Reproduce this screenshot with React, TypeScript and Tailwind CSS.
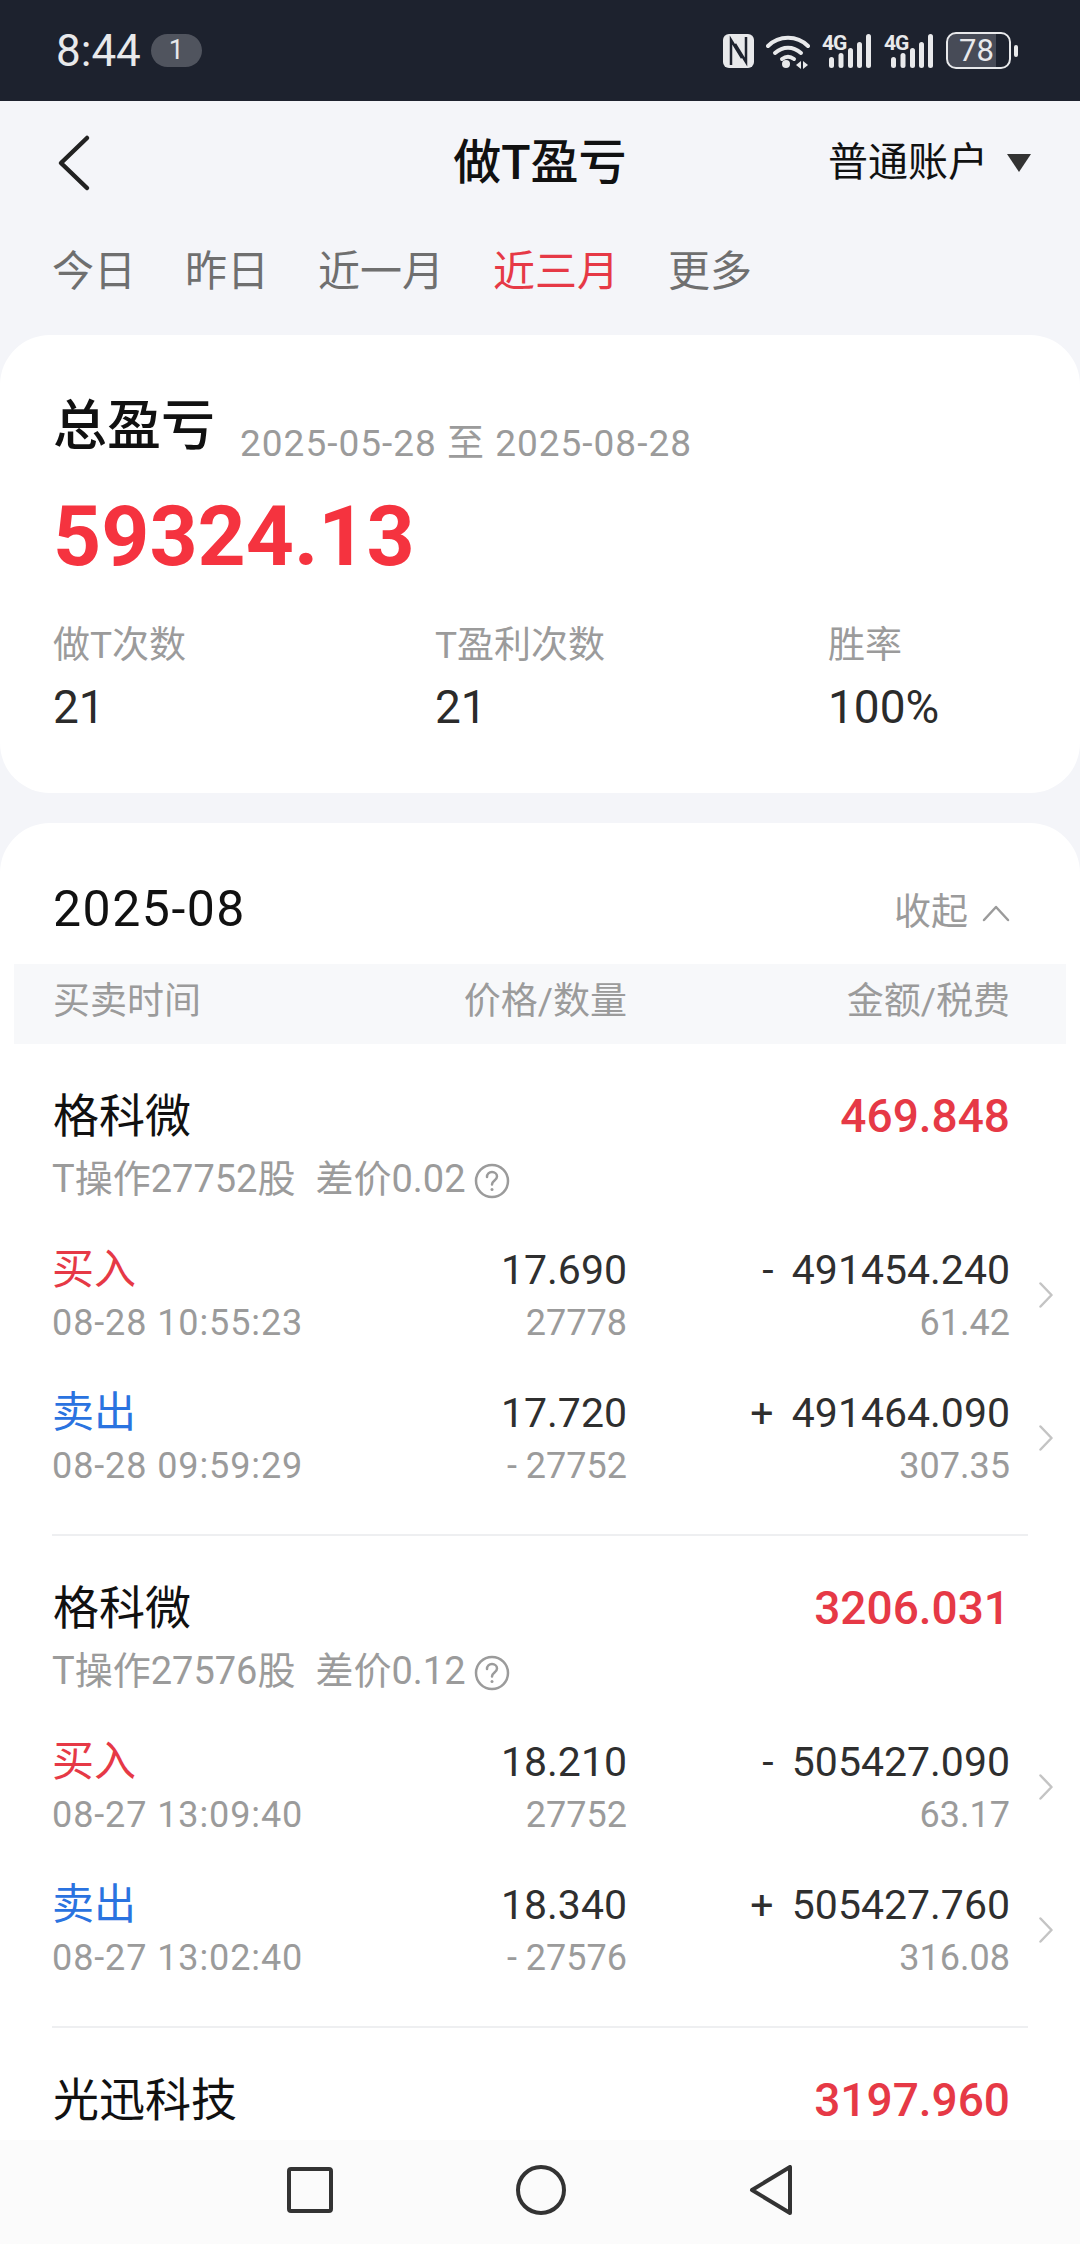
import React from "react";

const sans = "font-['Roboto','Noto_Sans_CJK_SC',sans-serif]";

type Trade = { side: "买入" | "卖出"; time: string; price: string; qty: string; amount: string; fee: string };
type Item = { name: string; profit: string; sub: string; diff: string; trades: Trade[] };

const items: Item[] = [
  {
    name: "格科微",
    profit: "469.848",
    sub: "T操作27752股",
    diff: "差价0.02",
    trades: [
      { side: "买入", time: "08-28 10:55:23", price: "17.690", qty: "27778", amount: "- 491454.240", fee: "61.42" },
      { side: "卖出", time: "08-28 09:59:29", price: "17.720", qty: "- 27752", amount: "+ 491464.090", fee: "307.35" },
    ],
  },
  {
    name: "格科微",
    profit: "3206.031",
    sub: "T操作27576股",
    diff: "差价0.12",
    trades: [
      { side: "买入", time: "08-27 13:09:40", price: "18.210", qty: "27752", amount: "- 505427.090", fee: "63.17" },
      { side: "卖出", time: "08-27 13:02:40", price: "18.340", qty: "- 27576", amount: "+ 505427.760", fee: "316.08" },
    ],
  },
];

function Signal() {
  return (
    <span className="w-[50px] h-[36px] flex flex-col relative">
      <span className="absolute left-0 top-0 text-[21px] leading-[20px] font-bold tracking-[-1px]">4G</span>
      <svg width="50" height="36" viewBox="0 0 50 36" fill="#e8e9eb">
        <rect x="7" y="24" width="5" height="11" rx="2.5" />
        <rect x="16.5" y="20" width="5" height="15" rx="2.5" />
        <rect x="26" y="15" width="5" height="20" rx="2.5" />
        <rect x="35" y="9" width="5" height="26" rx="2.5" />
        <rect x="44" y="1" width="5" height="34" rx="2.5" />
      </svg>
    </span>
  );
}

function StatusBar() {
  return (
    <div className="h-[101px] shrink-0 bg-[#1d222e] flex items-center pl-[56px] text-[#e8e9eb]">
      <span className="text-[44px] leading-none">8:44</span>
      <span className="ml-[10px] w-[51px] h-[33px] rounded-full bg-[#50545e] flex items-center justify-center text-[27px] leading-none">1</span>
      <div className="ml-auto mr-[62px] flex items-center">
        {/* nfc */}
        <svg width="31" height="34" viewBox="0 0 31 34" fill="none">
          <rect width="31" height="34" rx="6" fill="#e8e9eb" />
          <path d="M8 31V6l11 18M23 3v25L12 10" stroke="#1d222e" strokeWidth="2.500" />
        </svg>
        {/* wifi */}
        <svg className="ml-[12px]" width="46" height="36" viewBox="0 0 46 36" fill="none" stroke="#e8e9eb" strokeWidth="4" strokeLinecap="round">
          <path d="M2 13C13 2 31 2 42 13" />
          <path d="M9 20c8-7 18-7 26 0" />
          <path d="M16 26c4-3 8-3 12 0" />
          <circle cx="20" cy="31" r="4" fill="#e8e9eb" stroke="none" />
          <path d="M30 32l5-4v8zM37 28l5 4-5 4z" fill="#e8e9eb" stroke="none" />
        </svg>
        <span className="ml-[10px] flex">
          <Signal />
        </span>
        <span className="ml-[12px] flex">
          <Signal />
        </span>
        <span className="ml-[12px] w-[65px] h-[37px] rounded-[10px] border-2 border-[#e8e9eb] bg-[linear-gradient(90deg,#474b57_78%,transparent_78%)] flex items-center justify-center pr-[4px] text-[31px] leading-none">
          78
        </span>
        <span className="ml-[3px] w-[4px] h-[12px] rounded-full bg-[#e8e9eb]" />
      </div>
    </div>
  );
}

function Header() {
  return (
    <div className="h-[118px] pt-[6px] flex items-center pl-[56px] pr-[48px] relative">
      <svg width="36" height="58" viewBox="0 0 36 58" fill="none" stroke="#222" strokeWidth="4.500" strokeLinecap="round" strokeLinejoin="round">
        <path d="M31 4L5 29l26 25" />
      </svg>
      <h1 className="absolute left-0 right-0 text-center text-[48px] leading-none font-medium text-[#111]">做T盈亏</h1>
      <div className="ml-auto flex items-center">
        <span className="text-[40px] leading-none text-[#111]">普通账户</span>
        <svg className="ml-[18px]" width="26" height="20" viewBox="0 0 26 20">
          <path d="M1 1h24L13 19z" fill="#333" />
        </svg>
      </div>
    </div>
  );
}

function Tabs() {
  const tabs = ["今日", "昨日", "近一月", "近三月", "更多"];
  return (
    <div className="h-[116px] pb-[10px] pl-[52px] flex items-center gap-[49px] text-[42px] leading-none text-[#6f6f6f]">
      {tabs.map((t) => (
        <span key={t} className={t === "近三月" ? "text-[#e63946]" : ""}>
          {t}
        </span>
      ))}
    </div>
  );
}

function Summary() {
  const stats = [
    { label: "做T次数", value: "21", w: "w-[382px]" },
    { label: "T盈利次数", value: "21", w: "w-[393px]" },
    { label: "胜率", value: "100%", w: "" },
  ];
  return (
    <section className="h-[458px] shrink-0 rounded-[50px] bg-white pl-[53px] pt-[62px]">
      <div className="flex items-end h-[60px]">
        <span className="text-[54px] leading-[60px] font-medium text-[#111]">总盈亏</span>
        <span className="ml-[25px] mb-[-10px] text-[37px] leading-[46px] text-[#9b9b9b] tracking-[1px]">2025-05-28 至 2025-08-28</span>
      </div>
      <div className="mt-[35px] text-[84px] leading-[90px] font-bold text-[#f5333f]">59324.13</div>
      <div className="mt-[41px] flex">
        {stats.map((s) => (
          <div key={s.label} className={s.w}>
            <div className="text-[37px] leading-[46px] text-[#9b9b9b]">{s.label}</div>
            <div className="mt-[15px] text-[46px] leading-[46px] text-[#2b2b2b]">{s.value}</div>
          </div>
        ))}
      </div>
    </section>
  );
}

function TradeRow({ t }: { t: Trade }) {
  return (
    <div className="grid grid-cols-[375px_200px_383px_auto] h-[106px] pl-[52px]">
      <div>
        <div className={`text-[42px] leading-[56px] ${t.side === "买入" ? "text-[#e63946]" : "text-[#2a73e0]"}`}>{t.side}</div>
        <div className="text-[36px] leading-[50px] text-[#9b9b9b] tracking-[0.9px] whitespace-nowrap">{t.time}</div>
      </div>
      <div className="text-right">
        <div className="text-[41px] leading-[56px] text-[#2f2f2f]">{t.price}</div>
        <div className="text-[36px] leading-[50px] text-[#9b9b9b]">{t.qty}</div>
      </div>
      <div className="text-right">
        <div className="text-[41px] leading-[56px] text-[#2f2f2f] whitespace-pre [word-spacing:8px]">{t.amount}</div>
        <div className="text-[36px] leading-[50px] text-[#9b9b9b]">{t.fee}</div>
      </div>
      <svg className="ml-[29px] self-center" width="14" height="26" viewBox="0 0 14 26" fill="none" stroke="#c4c4c4" strokeWidth="2.500" strokeLinecap="round" strokeLinejoin="round">
        <path d="M1.500 1.500L12.500 13 1.500 24.500" />
      </svg>
    </div>
  );
}

function ItemBlock({ item }: { item: Item }) {
  return (
    <div className="pt-[42px]">
      <div className="flex items-center justify-between h-[60px] pl-[53px] pr-[70px]">
        <span className="text-[46px] leading-none text-[#111]">{item.name}</span>
        <span className="text-[46px] leading-none font-medium text-[#e63946]">{item.profit}</span>
      </div>
      <div className="mt-[8px] h-[50px] pl-[52px] flex items-center text-[38px] leading-none text-[#9b9b9b]">
        <span>{item.sub}</span>
        <span className="ml-[20px]">{item.diff}</span>
        <svg className="ml-[8px] mt-[4px]" width="36" height="36" viewBox="0 0 36 36" fill="none" stroke="#9b9b9b" strokeWidth="2.500" strokeLinecap="round">
          <circle cx="18" cy="18" r="16" />
          <path d="M13 14c0-3 2.200-5 5-5s5 2 5 4.500c0 4-5 4-5 8" />
          <circle cx="18" cy="26.500" r="1.500" fill="#9b9b9b" stroke="none" />
        </svg>
      </div>
      <div className="mt-[38px] flex flex-col gap-[37px]">
        {item.trades.map((t) => (
          <TradeRow key={t.time} t={t} />
        ))}
      </div>
      <div className="mt-[43px] ml-[52px] mr-[52px] h-[2px] bg-[#eeeff1]" />
    </div>
  );
}

function Details() {
  return (
    <section className="mt-[30px] flex-1 rounded-t-[50px] bg-white pt-[38px]">
      <div className="h-[103px] pl-[53px] pr-[70px] flex items-start justify-between">
        <span className="mt-[18px] text-[50px] leading-[60px] text-[#111] tracking-[1.5px]">2025-08</span>
        <span className="mt-[27px] flex items-center text-[37px] leading-[50px] text-[#9b9b9b]">
          收起
          <svg className="ml-[14px]" width="28" height="18" viewBox="0 0 28 18" fill="none" stroke="#9b9b9b" strokeWidth="2.500" strokeLinecap="round" strokeLinejoin="round">
            <path d="M2 16L14 3l12 13" />
          </svg>
        </span>
      </div>
      <div className="mx-[14px] h-[80px] pb-[6px] bg-[#f7f8fa] grid grid-cols-[374px_200px_383px] pl-[39px] items-center text-[37px] leading-none text-[#9b9b9b]">
        <span>买卖时间</span>
        <span className="text-right whitespace-nowrap">价格/数量</span>
        <span className="text-right">金额/税费</span>
      </div>
      {items.map((item) => (
        <ItemBlock key={item.profit} item={item} />
      ))}
      <div className="pt-[42px] flex items-center justify-between h-[102px] pl-[53px] pr-[70px]">
        <span className="text-[46px] leading-none text-[#111]">光迅科技</span>
        <span className="text-[46px] leading-none font-medium text-[#e63946]">3197.960</span>
      </div>
    </section>
  );
}

function NavBar() {
  return (
    <div className="absolute bottom-0 left-0 right-0 h-[104px] pb-[4px] bg-[#fbfbfb] flex items-center pl-[287px]">
      <svg width="46" height="46" viewBox="0 0 46 46" fill="none" stroke="#333" strokeWidth="4" strokeLinejoin="round">
        <rect x="2" y="2" width="42" height="42" rx="2" />
      </svg>
      <svg className="ml-[183px]" width="50" height="50" viewBox="0 0 50 50" fill="none" stroke="#333" strokeWidth="4">
        <circle cx="25" cy="25" r="23" />
      </svg>
      <svg className="ml-[183px]" width="44" height="50" viewBox="0 0 44 50" fill="none" stroke="#333" strokeWidth="4" strokeLinejoin="round">
        <path d="M41 2v46L3 25z" />
      </svg>
    </div>
  );
}

export default function App() {
  return (
    <div className={`relative w-[1080px] h-[2244px] overflow-hidden bg-[#f4f5f9] flex flex-col ${sans}`}>
      <StatusBar />
      <Header />
      <Tabs />
      <Summary />
      <Details />
      <NavBar />
    </div>
  );
}
